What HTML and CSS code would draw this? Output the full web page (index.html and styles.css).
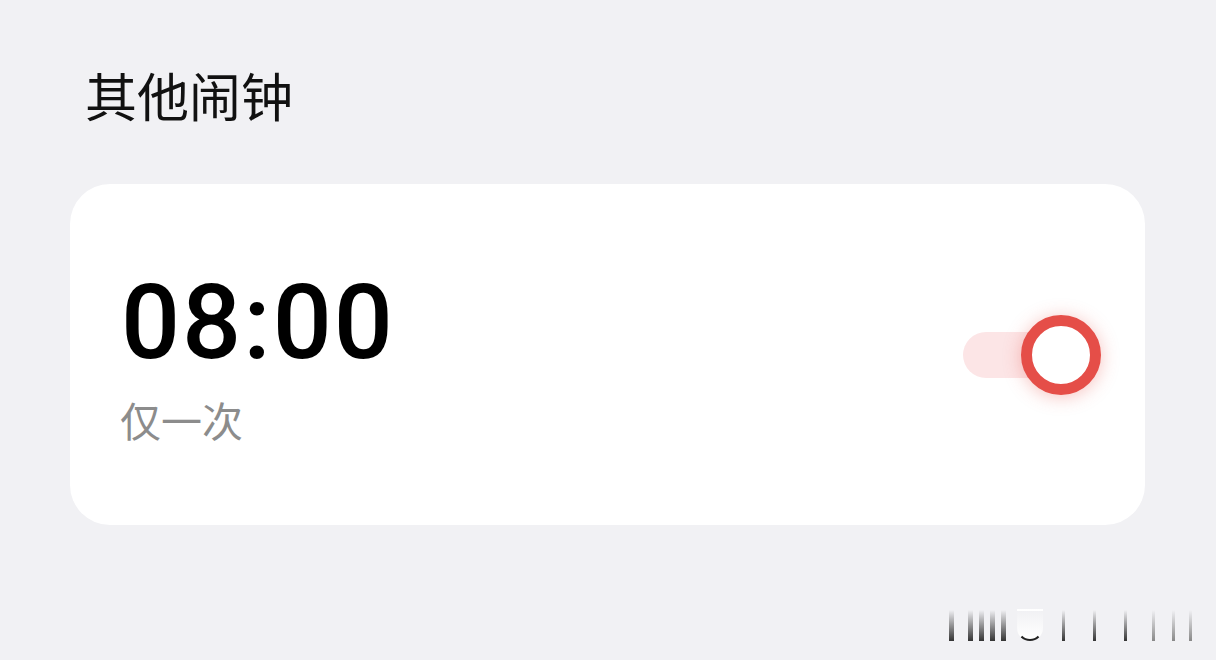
FILE: index.html
```html
<!DOCTYPE html>
<html lang="zh-CN">
<head>
  <meta charset="UTF-8" />
  <meta name="viewport" content="width=device-width, initial-scale=1.0"/>
  <title>其他闹钟</title>
  <link rel="stylesheet" href="styles.css">
</head>
<body>

<section class="alarms">
  <h2 class="group-title">其他闹钟</h2>

  <div class="alarm-card">
    <div class="alarm-info">
      <div class="alarm-time">08:00</div>
      <div class="alarm-repeat">仅一次</div>
    </div>
    <div class="switch on">
      <span class="switch-track"></span>
      <span class="switch-knob"></span>
    </div>
  </div>
</section>

<!-- faint mark in the corner -->
<div class="corner-mark">
  <i></i><i class="s first"></i><i class="s"></i><i class="s"></i><i class="s"></i>
  <b></b>
  <i class="thin m1"></i><i class="thin m2"></i><i class="thin m2"></i>
  <i class="thin faint m3"></i><i class="thin faint m4"></i><i class="thin faint m5"></i>
</div>

</body>
</html>
```

FILE: styles.css
```css
body {
  margin: 0;
  height: 660px;
  overflow: hidden;
  background: #f1f1f4;
  font-family: "Noto Sans CJK SC", "Noto Sans", sans-serif;
  color: #111;
}
.alarms {
  padding: 58px 71px 0 70px;
}
.group-title {
  margin: 0 0 0 15px;
  font-size: 52px;
  font-weight: 400;
  line-height: 74px;
  color: #111;
}
.alarm-card {
  margin-top: 52px;
  height: 341px;
  box-sizing: border-box;
  background: #fff;
  border-radius: 40px;
  padding: 0 44px 0 52px;
  display: flex;
  align-items: center;
  justify-content: space-between;
}
.alarm-info {
  display: flex;
  flex-direction: column;
  padding: 4px 0 4px;
}
.alarm-time {
  font-family: Roboto, "Noto Sans", sans-serif;
  font-size: 104px;
  font-weight: 500;
  line-height: 112px;
  letter-spacing: 2px;
  color: #000;
  margin-left: -1px;
}
.alarm-repeat {
  margin-top: 16px;
  font-size: 41px;
  line-height: 48px;
  color: #8c8c8c;
  margin-left: -2px;
}
.switch {
  position: relative;
  width: 138px;
  height: 80px;
  display: flex;
  align-items: center;
}
.switch-track {
  width: 100px;
  height: 46px;
  border-radius: 23px;
  background: #fce5e6;
}
.switch-knob {
  position: absolute;
  right: 0;
  top: 0;
  width: 80px;
  height: 80px;
  box-sizing: border-box;
  border-radius: 50%;
  border: 11px solid #e54e48;
  background: #fff;
  box-shadow: 0 2px 18px rgba(230, 80, 72, 0.35);
}
.corner-mark {
  position: absolute;
  left: 949px;
  top: 607px;
  height: 34px;
  display: flex;
  align-items: flex-end;
}
.corner-mark i {
  display: block;
  width: 5px;
  height: 31px;
  background: linear-gradient(#f1f1f4, #333);
}
.corner-mark i.s { margin-left: 6px; }
.corner-mark i.first { margin-left: 14px; }
.corner-mark i.thin { width: 3px; }
.corner-mark i.m1 { margin-left: 19px; }
.corner-mark i.m2 { margin-left: 28px; }
.corner-mark i.faint { background: linear-gradient(#f1f1f4, #888); }
.corner-mark i.m3 { margin-left: 25px; }
.corner-mark i.m4 { margin-left: 17px; }
.corner-mark i.m5 { margin-left: 14px; }
.corner-mark b {
  display: block;
  margin-left: 11px;
  width: 26px;
  height: 32px;
  box-sizing: border-box;
  border: 2px solid transparent;
  border-bottom-color: #222;
  border-radius: 0 0 13px 13px;
  background: linear-gradient(#f1f1f4, #fff);
}
```
